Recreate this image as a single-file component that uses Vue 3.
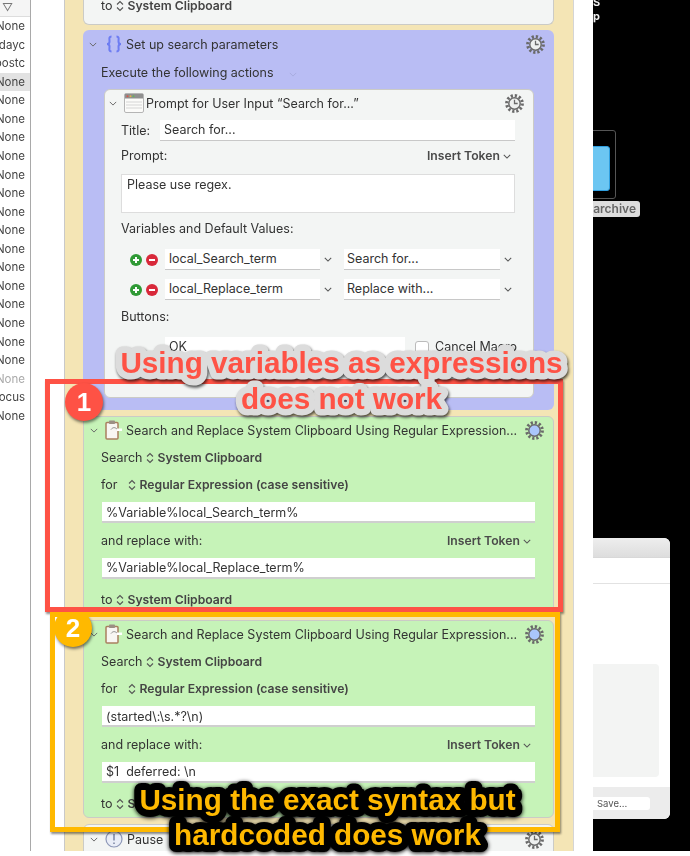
<template>
  <div class="screen">
    <div class="page">
      <aside class="list">
        <div class="list-head">▽</div>
        <div
          v-for="(item, index) in listRows"
          :key="index"
          class="list-row"
          :class="{ selected: index === 3, faded: index === 19 }"
        >
          {{ item }}
        </div>
      </aside>

      <div class="gutter"></div>

      <main class="macro">
        <section class="card top-card">
          <div class="line">to <svg class="updown" viewBox="0 0 8 12"><path d="M1 4.5 4 1.5 7 4.5M1 7.5 4 10.5 7 7.5" /></svg> <b>System Clipboard</b></div>
        </section>

        <section class="group">
          <div class="head">
            <svg class="toggle" viewBox="0 0 10 6"><path d="M1 1 5 5 9 1" /></svg>
            <svg class="braces" viewBox="0 0 18 18"><path d="M6.5 1.5C3.5 1.5 4.5 4 4.5 6.5 4.5 8 3.5 9 2 9 3.5 9 4.5 10 4.5 11.5 4.5 14 3.5 16.5 6.5 16.5M11.5 1.5C14.5 1.5 13.5 4 13.5 6.5 13.5 8 14.5 9 16 9 14.5 9 13.5 10 13.5 11.5 13.5 14 14.5 16.5 11.5 16.5" /></svg>
            <span>Set up search parameters</span>
            <svg class="gear" viewBox="0 0 18 18"><circle class="teeth" cx="9" cy="9" r="7.4" /><circle class="ring" cx="9" cy="9" r="5.4" /><path class="hands" d="M9 5.5V9H12" /></svg>
          </div>
          <div class="line execute">
            Execute the following actions
            <svg class="toggle faint" viewBox="0 0 10 6"><path d="M1 1 5 5 9 1" /></svg>
          </div>

          <div class="card prompt-card">
            <div class="head">
              <svg class="toggle" viewBox="0 0 10 6"><path d="M1 1 5 5 9 1" /></svg>
              <svg class="window-icon" viewBox="0 0 20 20">
                <rect x="0.5" y="0.5" width="19" height="19" rx="1.5" fill="#fbfbf9" stroke="#b5b5b5" />
                <rect x="1" y="1" width="18" height="4.5" fill="#8f8f8f" />
                <circle cx="3.5" cy="3.2" r="1" fill="#d9534a" />
                <circle cx="6.5" cy="3.2" r="1" fill="#dfb34a" />
                <circle cx="9.5" cy="3.2" r="1" fill="#62b45c" />
                <path d="M2 9H18M2 12H18M2 15H18" stroke="#d5d5d5" fill="none" />
              </svg>
              <span>Prompt for User Input “Search for...”</span>
              <svg class="gear" viewBox="0 0 18 18"><circle class="teeth" cx="9" cy="9" r="7.4" /><circle class="ring" cx="9" cy="9" r="5.4" /><path class="hands" d="M9 5.5V9H12" /></svg>
            </div>
            <div class="title-row">
              <span class="title-label">Title:</span>
              <div class="field title-field">Search for...</div>
            </div>
            <div class="line prompt-line">
              <span>Prompt:</span>
              <span class="token">Insert Token <svg class="chev" viewBox="0 0 10 6"><path d="M1 1 5 5 9 1" /></svg></span>
            </div>
            <div class="field textarea">Please use regex.</div>
            <div class="line vars-label">Variables and Default Values:</div>
            <div v-for="(row, index) in varRows" :key="index" class="var-row">
              <svg class="round" viewBox="0 0 12 12"><circle cx="6" cy="6" r="6" fill="#2f9a35" /><path d="M6 3V9M3 6H9" stroke="#fff" stroke-width="2" /></svg>
              <svg class="round" viewBox="0 0 12 12"><circle cx="6" cy="6" r="6" fill="#d8293a" /><path d="M3 6H9" stroke="#fff" stroke-width="2" /></svg>
              <div class="field var-name">{{ row.name }}</div>
              <svg class="chev var-chev" viewBox="0 0 10 6"><path d="M1 1 5 5 9 1" /></svg>
              <div class="field var-value">{{ row.value }}</div>
              <svg class="chev var-chev" viewBox="0 0 10 6"><path d="M1 1 5 5 9 1" /></svg>
            </div>
            <div class="line buttons-label">Buttons:</div>
            <div class="button-row">
              <div class="field ok-field">OK</div>
              <span class="check"></span>
              <span class="cancel">Cancel Macro</span>
            </div>
          </div>
        </section>

        <section
          v-for="(action, index) in actions"
          :key="index"
          class="card action"
        >
          <div class="head">
            <svg class="toggle" viewBox="0 0 10 6"><path d="M1 1 5 5 9 1" /></svg>
            <svg class="clip" viewBox="0 0 18 20">
              <rect x="1" y="2.5" width="12" height="16.5" rx="1" fill="#f8f6f2" stroke="#a9805f" stroke-width="1.5" />
              <rect x="4" y="0.5" width="6" height="3.5" rx="0.8" fill="#9b8f84" />
              <path d="M6 9.5C8 7 10 7 12.5 9.5" stroke="#8d8d8d" fill="none" />
              <path d="M12 8.5H17V11H12Z" fill="#fff" />
            </svg>
            <span>Search and Replace System Clipboard Using Regular Expression...</span>
            <svg class="gear" viewBox="0 0 18 18"><circle class="teeth" cx="9" cy="9" r="7.4" /><circle class="ring on" cx="9" cy="9" r="5.4" /></svg>
          </div>
          <div class="line">Search <svg class="updown" viewBox="0 0 8 12"><path d="M1 4.5 4 1.5 7 4.5M1 7.5 4 10.5 7 7.5" /></svg> <b>System Clipboard</b></div>
          <div class="line">for <svg class="updown for-arrows" viewBox="0 0 8 12"><path d="M1 4.5 4 1.5 7 4.5M1 7.5 4 10.5 7 7.5" /></svg> <b>Regular Expression (case sensitive)</b></div>
          <div class="field action-field">{{ action.search }}</div>
          <div class="line replace-line">
            <span>and replace with:</span>
            <span class="token">Insert Token <svg class="chev" viewBox="0 0 10 6"><path d="M1 1 5 5 9 1" /></svg></span>
          </div>
          <div class="field action-field second">{{ action.replace }}</div>
          <div class="line to-line">to <svg class="updown" viewBox="0 0 8 12"><path d="M1 4.5 4 1.5 7 4.5M1 7.5 4 10.5 7 7.5" /></svg> <b>System Clipboard</b></div>
        </section>

        <section class="card pause">
          <div class="head">
            <svg class="toggle" viewBox="0 0 10 6"><path d="M1 1 5 5 9 1" /></svg>
            <svg class="pause-icon" viewBox="0 0 18 18"><circle cx="9" cy="9" r="8" fill="#e9edf7" stroke="#8d97b8" stroke-width="1.2" /><path d="M9 4V10.5M9 12.5V14" stroke="#7b84a3" stroke-width="1.5" /></svg>
            <span>Pause</span>
            <svg class="gear" viewBox="0 0 18 18"><circle class="teeth" cx="9" cy="9" r="7.4" /><circle class="ring" cx="9" cy="9" r="5.4" /><path class="hands" d="M9 5.5V9H12" /></svg>
          </div>
        </section>
      </main>

      <div class="gutter-right"></div>

      <div class="desktop">
        <b class="desk-text s">S</b>
        <b class="desk-text p">p</b>
        <div class="thumb"><div class="folder"></div></div>
        <div class="thumb-label">archive</div>
        <div class="dialog">
          <div class="dialog-title"></div>
          <div class="dialog-tabs"></div>
          <div class="dialog-body"><div class="dialog-panel"></div></div>
          <div class="dialog-foot"><div class="save">Save...</div></div>
        </div>
      </div>
    </div>

    <div class="badge red-badge">1</div>
    <div class="badge amber-badge">2</div>
    <div class="frame red-frame"></div>
    <div class="frame amber-frame"></div>
    <svg class="notes" viewBox="0 0 690 856">
      <g class="red-note">
        <text x="341.5" y="373">Using variables as expressions</text>
        <text x="341.5" y="409">does not work</text>
      </g>
      <g class="amber-note">
        <text x="327.5" y="810">Using the exact syntax but</text>
        <text x="327.5" y="845">hardcoded does work</text>
      </g>
    </svg>
  </div>
</template>

<script setup>
const listRows = [
  "None", "dayc", "postc", "None", "None", "None", "None", "None", "None", "None", "None",
  "None", "None", "None", "None", "None", "None", "None", "None", "None", "Focus", "None",
];

const varRows = [
  { name: "local_Search_term", value: "Search for..." },
  { name: "local_Replace_term", value: "Replace with..." },
];

const actions = [
  { search: "%Variable%local_Search_term%", replace: "%Variable%local_Replace_term%" },
  { search: "(started\\:\\s.*?\\n)", replace: "$1  deferred: \\n" },
];
</script>

<style>
html,
body {
  margin: 0;
  background: #fff;
}
</style>

<style scoped>
.screen {
  position: relative;
  width: 690px;
  height: 856px;
  overflow: hidden;
  background: #fff;
  font-family: Inter, "Liberation Sans", sans-serif;
  font-size: 12.5px;
  color: #333;
}

.page {
  display: flex;
  height: 851px;
  overflow: hidden;
  filter: blur(0.35px);
}

.list {
  width: 30px;
  flex-shrink: 0;
  border-right: 1px solid #a9a9a9;
  overflow: hidden;
  font-size: 11.5px;
  color: #444;
}

.list-head {
  height: 17px;
  line-height: 15px;
  padding-left: 2px;
  background: #f5f5f5;
  border-bottom: 1px solid #ddd;
  box-sizing: border-box;
  font-size: 11px;
  color: #777;
}

.list-row {
  height: 18.57px;
  line-height: 18.57px;
  width: 25px;
  padding-right: 5px;
  display: flex;
  justify-content: flex-end;
  white-space: nowrap;
}

.list-row.selected {
  background: #e2e2e2;
}

.list-row.faded {
  color: #aaa;
}

.gutter {
  width: 33px;
  flex-shrink: 0;
}

.macro {
  width: 471px;
  flex-shrink: 0;
  padding: 0 19px 0 18px;
  background: #f4e5b5;
  border-left: 1px solid #c9c9c9;
  border-right: 1px solid #d5d5d5;
}

.gutter-right {
  width: 19px;
  flex-shrink: 0;
}

.card {
  box-sizing: border-box;
  background: #f3f5f4;
  border: 1px solid #cbcbc6;
  border-radius: 6px;
}

.top-card {
  height: 25px;
  border-top: 0;
  border-radius: 0 0 6px 6px;
  padding: 0 17px;
}

.top-card .line {
  height: 11px;
  line-height: 11px;
}

.group {
  box-sizing: border-box;
  height: 380px;
  margin-top: 5px;
  padding: 0 20px 0 21px;
  background: #b9bdf4;
  border-radius: 6px;
}

.head {
  display: flex;
  align-items: center;
  box-sizing: border-box;
  height: 28px;
  padding-bottom: 2px;
  white-space: nowrap;
}

.group > .head {
  margin: 0 -20px 0 -21px;
  padding: 0 9px 0 6px;
}

.toggle {
  width: 8px;
  height: 5px;
  flex-shrink: 0;
  fill: none;
  stroke: #666;
  stroke-width: 1.2;
}

.toggle.faint {
  margin-left: 12px;
  stroke: #a7abdf;
}

.braces {
  width: 18px;
  height: 18px;
  margin: 0 3px 0 8px;
  fill: none;
  stroke: #6d7cf2;
  stroke-width: 2;
}

.gear {
  width: 19px;
  height: 19px;
  margin-left: auto;
  flex-shrink: 0;
}

.teeth {
  fill: none;
  stroke: #6a6a6a;
  stroke-width: 3;
  stroke-dasharray: 2.1 1.78;
}

.ring {
  fill: #eef0ef;
  stroke: #6a6a6a;
  stroke-width: 1.4;
}

.ring.on {
  fill: #aac6fb;
}

.hands {
  fill: none;
  stroke: #6a6a6a;
  stroke-width: 1.2;
}

.line {
  height: 27px;
  line-height: 25px;
  white-space: nowrap;
}

.line b {
  font-size: 12.2px;
  font-weight: 600;
  color: #444;
}

.updown {
  width: 8px;
  height: 12px;
  vertical-align: -2px;
  fill: none;
  stroke: #555;
  stroke-width: 1.1;
}

.for-arrows {
  margin-left: 7px;
}

.execute {
  height: 26px;
  line-height: 25px;
  margin: 2px 0 3px -3px;
}

.prompt-card {
  height: 309px;
  padding: 0 17px 0 16px;
}

.prompt-card > .head {
  margin: 0 -17px 0 -16px;
  padding: 0 9px 2px 4px;
}

.window-icon {
  width: 20px;
  height: 20px;
  margin: 0 2px 0 7px;
}

.field {
  box-sizing: border-box;
  flex-shrink: 0;
  height: 21px;
  line-height: 20px;
  padding: 0 4px;
  background: #fff;
  border-bottom: 1px solid #c8c8c8;
  white-space: pre;
}

.title-row {
  display: flex;
  align-items: center;
  margin-top: 2px;
  margin-right: 1px;
}

.title-label {
  width: 39px;
}

.title-field {
  flex: 1;
}

.prompt-line,
.replace-line {
  display: flex;
  justify-content: space-between;
}

.prompt-line {
  height: 26px;
  line-height: 24px;
  margin-top: 3px;
}

.token {
  font-size: 12.2px;
  font-weight: 600;
  color: #4a4a4a;
  padding-right: 5px;
}

.chev {
  width: 8px;
  height: 5px;
  fill: none;
  stroke: #555;
  stroke-width: 1.3;
  vertical-align: 1px;
  flex-shrink: 0;
}

.textarea {
  height: 39px;
  margin-top: 4px;
  margin-right: 1px;
  padding: 0 5px;
  border: 1px solid #ddd;
  line-height: 20px;
}

.vars-label {
  height: 26px;
  line-height: 24px;
  margin-top: 4px;
}

.var-row {
  display: flex;
  align-items: center;
  height: 21px;
  margin-top: 9px;
}

.vars-label + .var-row {
  margin-top: 6px;
}

.round {
  width: 12px;
  height: 12px;
  margin-left: 4px;
  flex-shrink: 0;
}

.round:first-child {
  margin-left: 9px;
}

.var-name {
  width: 155px;
  margin-left: 7px;
}

.var-value {
  width: 156px;
  padding-left: 3px;
}

.var-chev {
  margin: 0 12px 0 4px;
  width: 8px;
}

.buttons-label {
  height: 26px;
  line-height: 24px;
  margin-top: 5px;
}

.button-row {
  display: flex;
  align-items: center;
  margin-top: 6px;
  padding-left: 44px;
}

.ok-field {
  width: 240px;
}

.check {
  box-sizing: border-box;
  flex-shrink: 0;
  width: 14px;
  height: 14px;
  margin: 0 6px 0 10px;
  background: #fff;
  border: 1px solid #bbb;
  border-radius: 3px;
}

.cancel {
  white-space: nowrap;
  padding-bottom: 3px;
}

.action {
  height: 198px;
  margin-top: 6px;
  padding: 0 17px;
  background: #c6f3b8;
}

.action > .head {
  margin: 0 -17px;
  padding: 0 9px 2px 6px;
}

.clip {
  width: 18px;
  height: 20px;
  margin: 0 3px 0 7px;
  flex-shrink: 0;
}

.action-field {
  margin: 3px 1px 0 1px;
  line-height: 21px;
  border-bottom: 2px solid #cfcfcf;
}

.replace-line {
  height: 26px;
  line-height: 26px;
  margin-top: 5px;
}

.second {
  margin-top: 4px;
  line-height: 20px;
}

.to-line {
  height: 26px;
  line-height: 24px;
  margin-top: 9px;
}

.pause {
  height: 60px;
  margin-top: 6px;
}

.pause > .head {
  padding: 0 9px 0 6px;
}

.pause-icon {
  width: 18px;
  height: 18px;
  margin: 0 4px 0 7px;
}

.desktop {
  position: relative;
  flex: 1;
  background: #000;
  overflow: hidden;
}

.desk-text {
  position: absolute;
  left: 0;
  color: #eee;
  font-size: 11px;
  line-height: 12px;
}

.s {
  top: -4px;
}

.p {
  top: 10px;
}

.thumb {
  position: absolute;
  left: -40px;
  top: 130px;
  width: 61px;
  height: 67px;
  border: 1px solid #555;
  border-radius: 3px;
}

.folder {
  position: absolute;
  right: 5px;
  top: 15px;
  width: 40px;
  height: 43px;
  background: #6cc6f2;
  border: 1px solid #2f9fe0;
  border-radius: 3px;
}

.thumb-label {
  position: absolute;
  left: -20px;
  top: 201px;
  width: 63px;
  height: 16px;
  line-height: 16px;
  padding-right: 4px;
  background: #ddd;
  border-radius: 3px;
  color: #666;
  font-size: 12px;
  font-weight: 600;
  text-align: right;
}

.dialog {
  position: absolute;
  left: -20px;
  top: 538px;
  width: 97px;
  height: 281px;
  display: flex;
  flex-direction: column;
  background: #fff;
  border-radius: 0 6px 6px 0;
  overflow: hidden;
}

.dialog-title {
  height: 19px;
  background: linear-gradient(#eee, #ddd);
  border-bottom: 1px solid #d8d8d8;
}

.dialog-tabs {
  height: 26px;
  border-bottom: 1px solid #e2e2e2;
}

.dialog-body {
  flex: 1;
  padding: 80px 11px 10px 0;
}

.dialog-panel {
  height: 113px;
  background: #f3f4f3;
  border-radius: 4px;
}

.dialog-foot {
  box-sizing: border-box;
  height: 32px;
  padding: 10px 20px 0 0;
  background: #ececec;
}

.save {
  width: 77px;
  height: 13px;
  line-height: 13px;
  padding-left: 24px;
  box-sizing: border-box;
  background: #fff;
  border-radius: 3px;
  font-size: 9.5px;
  color: #555;
}

.frame {
  position: absolute;
  box-sizing: border-box;
  border-width: 5px;
  border-style: solid;
  box-shadow: 1px 2px 2px rgba(0, 0, 0, 0.45);
}

.red-frame {
  left: 45px;
  top: 379px;
  width: 518px;
  height: 233px;
  border-color: #fe5245;
}

.amber-frame {
  left: 50px;
  top: 612px;
  width: 510px;
  height: 220px;
  border-color: #ffb900;
}

.badge {
  position: absolute;
  box-sizing: border-box;
  width: 38px;
  height: 38px;
  line-height: 38px;
  border-radius: 50%;
  color: #fff;
  font-family: "Liberation Sans", sans-serif;
  font-size: 26px;
  font-weight: 700;
  text-align: center;
  box-shadow: 1px 2px 3px rgba(0, 0, 0, 0.5);
}

.red-badge {
  left: 65px;
  top: 383px;
  background: #fe5245;
  z-index: 1;
}

.amber-badge {
  left: 54px;
  top: 609px;
  background: #ffb900;
}

.notes {
  position: absolute;
  left: 0;
  top: 0;
  width: 690px;
  height: 856px;
  z-index: 2;
}

.notes text {
  font-family: "Liberation Sans", sans-serif;
  font-size: 29.7px;
  font-weight: 700;
  text-anchor: middle;
  paint-order: stroke fill;
  stroke-linejoin: round;
}

.red-note text {
  fill: #fe5245;
  stroke: #dcdcdc;
  stroke-width: 13px;
}

.red-note {
  filter: drop-shadow(1px 2px 1.5px rgba(0, 0, 0, 0.7));
}

.amber-note text {
  fill: #ffb900;
  stroke: #000;
  stroke-width: 14px;
}

.amber-note {
  filter: drop-shadow(0 1px 2px #000);
}
</style>
